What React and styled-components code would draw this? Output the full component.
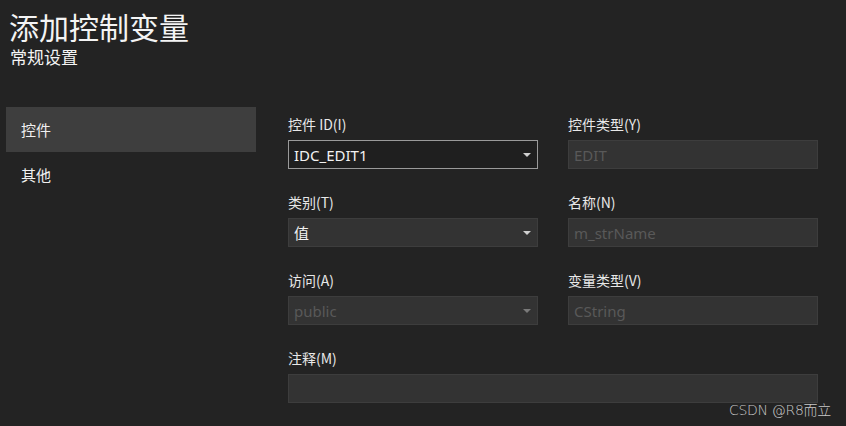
import React from 'react';
import styled, { createGlobalStyle } from 'styled-components';

const GlobalStyle = createGlobalStyle`
  html, body {
    margin: 0;
    padding: 0;
    background: #232323;
  }
  body {
    font-family: "Noto Sans", "Noto Sans CJK SC", sans-serif;
    color: #f1f1f1;
  }
`;

const Page = styled.div`
  position: relative;
  width: 846px;
  height: 426px;
  overflow: hidden;
  background: #232323;
`;

const Header = styled.header`
  padding: 6px 0 0 9px;
  height: 107px;
  box-sizing: border-box;
`;

const Title = styled.h1`
  margin: 0;
  font-family: "Noto Sans CJK SC", sans-serif;
  font-size: 30px;
  font-weight: 400;
  line-height: 40px;
  color: #f4f4f4;
`;

const Subtitle = styled.h2`
  margin: 0 0 0 1px;
  font-family: "Noto Sans CJK SC", sans-serif;
  font-size: 17px;
  font-weight: 400;
  line-height: 22px;
  color: #f4f4f4;
`;

const Body = styled.div`
  display: flex;
  align-items: flex-start;
`;

const Nav = styled.nav`
  width: 250px;
  margin-left: 6px;
  display: flex;
  flex-direction: column;
`;

const NavItem = styled.div`
  height: 45px;
  display: flex;
  align-items: center;
  padding-left: 15px;
  font-family: "Noto Sans CJK SC", sans-serif;
  font-size: 15px;
  color: #f0f0f0;
  background: ${p => (p.$active ? '#3e3e3e' : 'transparent')};
`;

const Form = styled.div`
  margin-left: 32px;
  padding-top: 7px;
  width: 530px;
  display: grid;
  grid-template-columns: 250px 250px;
  column-gap: 30px;
  row-gap: 23px;
`;

const Field = styled.div`
  display: flex;
  flex-direction: column;
  grid-column: ${p => (p.$wide ? '1 / span 2' : 'auto')};
`;

const Label = styled.label`
  height: 20px;
  line-height: 20px;
  margin-bottom: 6px;
  font-family: "Noto Sans CJK SC", sans-serif;
  font-size: 14px;
  color: #e8e8e8;
`;

const Box = styled.div`
  position: relative;
  height: 29px;
  box-sizing: border-box;
  display: flex;
  align-items: center;
  padding: 0 5px;
  font-family: "Noto Sans", "Noto Sans CJK SC", sans-serif;
  font-size: 15px;
  color: ${p => (p.$disabled ? '#595959' : '#f2f2f2')};
  background: ${p => (p.$focused ? '#1f1f1f' : '#333333')};
  border: 1px solid ${p => (p.$focused ? '#9a9a9a' : '#3d3d3d')};
`;

const Arrow = styled.span`
  position: absolute;
  right: 6px;
  top: 50%;
  margin-top: -2px;
  width: 0;
  height: 0;
  border-left: 4px solid transparent;
  border-right: 4px solid transparent;
  border-top: 4px solid ${p => (p.$disabled ? '#7a7a7a' : '#d0d0d0')};
`;

const Watermark = styled.div`
  position: absolute;
  right: 15px;
  bottom: 7px;
  font-family: "DejaVu Sans", "Noto Sans CJK SC", sans-serif;
  font-size: 14px;
  font-weight: 300;
  color: #c8c8c8;
  letter-spacing: -0.3px;
`;

const Combo = ({ value, disabled, focused }) => (
  <Box $disabled={disabled} $focused={focused}>
    {value}
    <Arrow $disabled={disabled} />
  </Box>
);

const App = () => (
  <Page>
    <GlobalStyle />
    <Header>
      <Title>添加控制变量</Title>
      <Subtitle>常规设置</Subtitle>
    </Header>
    <Body>
      <Nav>
        <NavItem $active>控件</NavItem>
        <NavItem>其他</NavItem>
      </Nav>
      <Form>
        <Field>
          <Label>控件 ID(I)</Label>
          <Combo value="IDC_EDIT1" focused />
        </Field>
        <Field>
          <Label>控件类型(Y)</Label>
          <Box $disabled>EDIT</Box>
        </Field>
        <Field>
          <Label>类别(T)</Label>
          <Combo value="值" />
        </Field>
        <Field>
          <Label>名称(N)</Label>
          <Box $disabled>m_strName</Box>
        </Field>
        <Field>
          <Label>访问(A)</Label>
          <Combo value="public" disabled />
        </Field>
        <Field>
          <Label>变量类型(V)</Label>
          <Box $disabled>CString</Box>
        </Field>
        <Field $wide>
          <Label>注释(M)</Label>
          <Box />
        </Field>
      </Form>
    </Body>
    <Watermark>CSDN @R8而立</Watermark>
  </Page>
);

export default App;
